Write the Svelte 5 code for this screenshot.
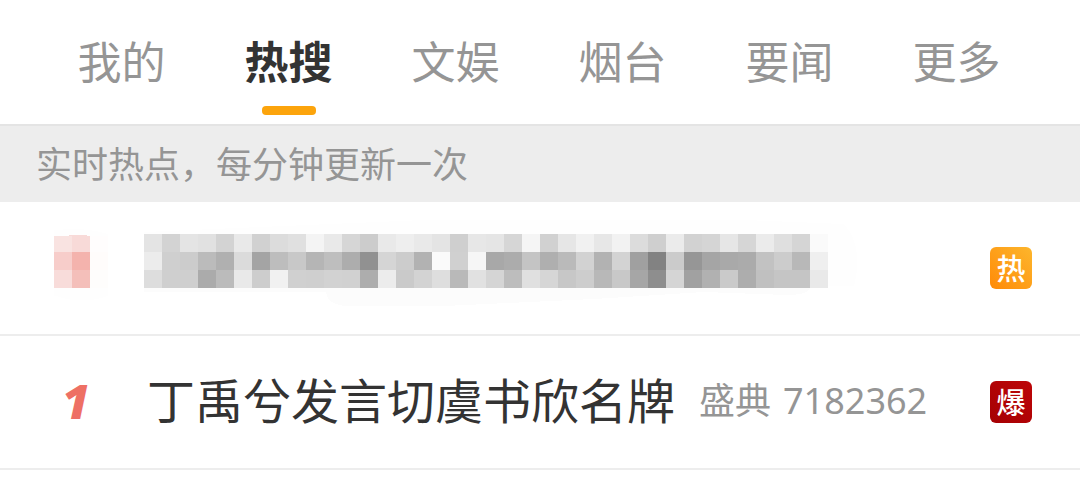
<script>
  const tabs = ['我的', '热搜', '文娱', '烟台', '要闻', '更多'];
  let active = $state('热搜');

  const cell = 18;
  // grey levels of the censored title, one string per mosaic row
  const rows = [
    'e4 d3 e4 e1 d3 e9 d1 dc e0 f4 e9 d6 cc e9 ee e9 e4 cf e7 e5 d6 f5 d1 e6 f1 e7 f2 dc cf eb d2 d5 e6 d6 eb df d5 fa',
    'ec cf cc bb b0 db a4 bd c8 b5 be ad 91 d5 cc b2 fa d0 f6 a8 ac c4 af ba d2 b2 d3 a0 82 cb 96 a5 a9 ab c2 cc b8 ef',
    'dd cf cf ab bb e9 cd f1 d0 cf d2 d1 ad ec ca d3 de b9 e1 d5 bd e0 d6 c7 cd b8 c8 a6 8e d5 a1 b1 ca ad c0 c5 c5 e9'
  ].map((r) => r.split(' '));
  const rankCells = [
    ['#f9e3e1', '#f8dad8', '#fffdfd'],
    ['#f7cdca', '#f4b3ad', '#fffcfb'],
    ['#f8dcda', '#f4bfba', '#fefdfc']
  ];
</script>

<main>
  <nav>
    {#each tabs as tab}
      <button class:active={tab === active} onclick={() => (active = tab)}>{tab}</button>
    {/each}
  </nav>
  <p class="notice">实时热点，每分钟更新一次</p>
  <ul>
    <li>
      <svg class="rank-mosaic" width="54" height="104" viewBox="0 0 54 104" shape-rendering="crispEdges" aria-hidden="true">
        <path d="M-16 18Q20 8 54 18V80Q20 92-16 72Z" fill="#fefefe" />
        {#each rankCells as row, y}
          {#each row as fill, x}
            <rect x={x * cell} y={18 + y * cell + (y ? 0 : 2)} width={cell} height={cell - (y ? 0 : 2)} {fill} />
          {/each}
        {/each}
        <path d="M9 20L20 19H30L36 20Z" fill="#f8dad8" />
      </svg>
      <svg class="title-mosaic" width="738" height="104" viewBox="0 0 738 104" shape-rendering="crispEdges" aria-hidden="true">
        <path d="M0 16L280 4H600L700 8Q720 30 710 70H0Z" fill="#fefefe" />
        <path d="M0 72H666Q664 79 642 79L560 76L450 83L300 90H205Q184 90 182 76H0Z" fill="#fcfcfc" />
        {#each rows as row, y}
          {#each row as grey, x}
            <rect x={x * cell} y={18 + y * cell} width={cell} height={cell} fill={`#${grey}${grey}${grey}`} />
          {/each}
        {/each}
      </svg>
      <span class="badge hot">热</span>
    </li>
    <li>
      <span class="rank">1</span>
      <a href="#topic">
        <span class="title">丁禹兮发言切虞书欣名牌</span>
        <span class="count"><span>盛典</span><span>7182362</span></span>
      </a>
      <span class="badge boom">爆</span>
    </li>
  </ul>
</main>

<style>
  :global(body) {
    margin: 0;
    background: #fff;
  }
  main {
    font-family: 'Noto Sans CJK SC', sans-serif;
    color: #333;
  }
  nav {
    display: grid;
    grid-template-columns: repeat(6, 1fr);
    padding: 0 40px 0 38px;
    border-bottom: 2px solid #e4e4e4;
  }
  button {
    display: flex;
    flex-direction: column;
    align-items: center;
    gap: 16px;
    padding: 30px 0 9px;
    border: 0;
    background: none;
    font: 400 44px/60px 'Noto Sans CJK SC', sans-serif;
    color: #959595;
    white-space: nowrap;
    cursor: pointer;
  }
  button::after {
    content: '';
    width: 54px;
    height: 9px;
    border-radius: 4px;
  }
  .active {
    font-weight: 700;
    color: #333;
  }
  .active::after {
    background: #fca40c;
  }
  .notice {
    margin: 0;
    padding: 10px 36px 14px;
    background: #ededed;
    font-size: 36px;
    line-height: 52px;
    color: #959595;
  }
  ul {
    margin: 0;
    padding: 0;
    list-style: none;
  }
  li {
    display: grid;
    grid-template-columns: 90px 1fr 42px;
    align-items: center;
    min-height: 132px;
    padding: 0 48px 0 54px;
    border-bottom: 2px solid #ededed;
  }
  svg {
    display: block;
  }
  .rank {
    padding: 0 0 2px 8px;
    font: italic 900 48px/64px 'Noto Sans', sans-serif;
    color: #ee7064;
  }
  a {
    display: flex;
    align-items: center;
    gap: 24px;
    padding-left: 3px;
    color: inherit;
    text-decoration: none;
    white-space: nowrap;
  }
  .title {
    padding-bottom: 8px;
    font-size: 48px;
    line-height: 72px;
  }
  .count {
    display: flex;
    gap: 12px;
    padding-bottom: 2px;
    font-family: 'Noto Sans', 'Noto Sans CJK SC', sans-serif;
    font-size: 36px;
    line-height: 52px;
    color: #959595;
  }
  .badge {
    padding-bottom: 2px;
    border-radius: 6px;
    font-size: 29px;
    font-weight: 500;
    line-height: 40px;
    text-align: center;
    color: #fff;
  }
  .hot {
    background: linear-gradient(45deg, #ff8a08, #fdb62c);
  }
  .boom {
    background: linear-gradient(45deg, #a50003, #bd0608);
  }
</style>
